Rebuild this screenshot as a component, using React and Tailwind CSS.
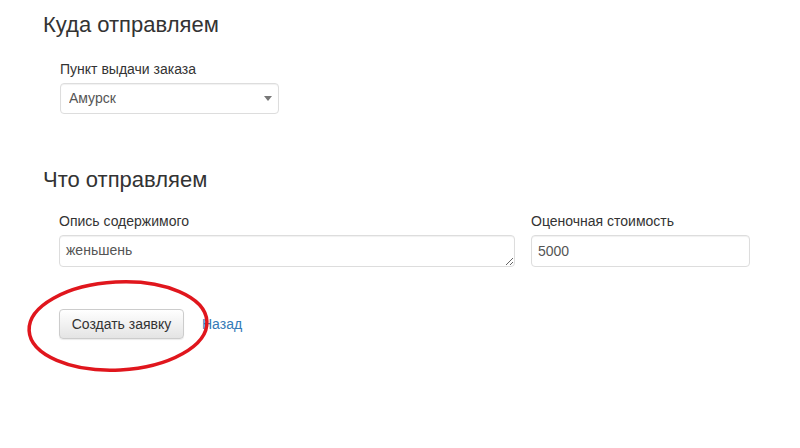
export default function App() {
  return (
    <div className="relative min-h-[448px] w-[800px] bg-white font-['Liberation_Sans',Arial,sans-serif] text-[#333]">
      <div className="pl-[43px] pt-[12px]">
        <h3 className="text-[22px] leading-[26px]">Куда отправляем</h3>

        <div className="mt-[23px] pl-[17px]">
          <label className="block text-[14px] leading-[16px]">Пункт выдачи заказа</label>
          <div className="relative mt-[6px] w-[219px]">
            <select
              defaultValue="Амурск"
              className="h-[31px] w-full appearance-none rounded-[4px] border border-[#ddd] bg-white pl-[8px] text-[14px] text-[#555] shadow-[inset_0_1px_1px_rgba(0,0,0,0.06)] outline-none"
            >
              <option>Амурск</option>
            </select>
            <span className="pointer-events-none absolute right-[7px] top-[13px] h-0 w-0 border-x-[4px] border-t-[5px] border-x-transparent border-t-[#777]" />
          </div>
        </div>

        <h3 className="mt-[53px] text-[22px] leading-[26px]">Что отправляем</h3>

        <div className="mt-[20px] flex gap-[16px] pl-[16px]">
          <div className="w-[456px]">
            <label className="block text-[14px] leading-[16px]">Опись содержимого</label>
            <textarea
              defaultValue="женьшень"
              className="mt-[6px] block h-[32px] w-full rounded-[4px] border border-[#ddd] px-[6px] py-[6px] text-[14px] leading-[17px] text-[#555] shadow-[inset_0_1px_1px_rgba(0,0,0,0.06)] outline-none"
            />
          </div>
          <div className="w-[219px]">
            <label className="block text-[14px] leading-[16px]">Оценочная стоимость</label>
            <input
              defaultValue="5000"
              className="mt-[6px] block h-[32px] w-full rounded-[4px] border border-[#ddd] px-[6px] text-[14px] text-[#555] shadow-[inset_0_1px_1px_rgba(0,0,0,0.06)] outline-none"
            />
          </div>
        </div>

        <div className="mt-[42px] flex items-center pl-[16px]">
          <button className="h-[30px] w-[125px] rounded-[4px] border border-[#ccc] bg-gradient-to-b from-white to-[#e4e4e4] text-[14px] text-[#333] shadow-[0_1px_1px_rgba(0,0,0,0.08)]">
            Создать заявку
          </button>
          <a href="#" className="ml-[18px] text-[14px] text-[#337ab7]">Назад</a>
        </div>
      </div>

      <svg className="pointer-events-none absolute left-0 top-0" width="800" height="448">
        <ellipse cx="118" cy="326" rx="89" ry="44" fill="none" stroke="#e0161d" strokeWidth="3.5" transform="rotate(-3 118 326)" />
      </svg>
    </div>
  )
}
